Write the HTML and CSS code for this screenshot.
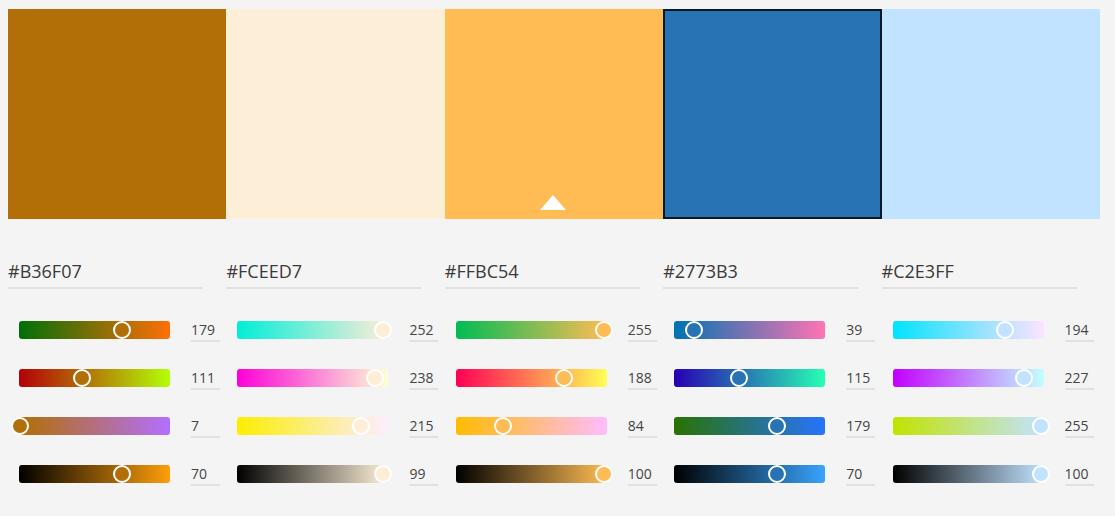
FILE: index.html
```html
<!DOCTYPE html>
<html lang="en">
<head>
<meta charset="utf-8">
<title>Color Theme</title>
<link rel="stylesheet" href="styles.css">
</head>
<body>
<main class="theme">
  <section class="col">
    <div class="swatch" style="background:#B36F07"></div>
    <div class="hex">#B36F07</div>
    <div class="sliders">
      <div class="row"><div class="bar" style="background:linear-gradient(to right,rgb(0,111,7),rgb(255,111,7))"><span class="thumb" style="left:94px;background:#B36F07"></span></div><div class="num">179</div></div>
      <div class="row"><div class="bar" style="background:linear-gradient(to right,rgb(179,0,7),rgb(179,255,7))"><span class="thumb" style="left:54px;background:#B36F07"></span></div><div class="num">111</div></div>
      <div class="row"><div class="bar" style="background:linear-gradient(to right,rgb(179,111,0),rgb(179,111,255))"><span class="thumb" style="left:-8px;background:#B36F07"></span></div><div class="num">7</div></div>
      <div class="row"><div class="bar" style="background:linear-gradient(to right,rgb(0,0,0),rgb(255,158,10))"><span class="thumb" style="left:94px;background:#B36F07"></span></div><div class="num">70</div></div>
    </div>
  </section>
  <section class="col">
    <div class="swatch" style="background:#FCEED7"></div>
    <div class="hex">#FCEED7</div>
    <div class="sliders">
      <div class="row"><div class="bar" style="background:linear-gradient(to right,rgb(0,238,215),rgb(255,238,215))"><span class="thumb" style="left:137px;background:#FCEED7"></span></div><div class="num">252</div></div>
      <div class="row"><div class="bar" style="background:linear-gradient(to right,rgb(252,0,215),rgb(252,255,215))"><span class="thumb" style="left:129px;background:#FCEED7"></span></div><div class="num">238</div></div>
      <div class="row"><div class="bar" style="background:linear-gradient(to right,rgb(252,238,0),rgb(252,238,255))"><span class="thumb" style="left:115px;background:#FCEED7"></span></div><div class="num">215</div></div>
      <div class="row"><div class="bar" style="background:linear-gradient(to right,rgb(0,0,0),rgb(255,241,218))"><span class="thumb" style="left:137px;background:#FCEED7"></span></div><div class="num">99</div></div>
    </div>
  </section>
  <section class="col">
    <div class="swatch" style="background:#FFBC54"><span class="marker"></span></div>
    <div class="hex">#FFBC54</div>
    <div class="sliders">
      <div class="row"><div class="bar" style="background:linear-gradient(to right,rgb(0,188,84),rgb(255,188,84))"><span class="thumb" style="left:139px;background:#FFBC54"></span></div><div class="num">255</div></div>
      <div class="row"><div class="bar" style="background:linear-gradient(to right,rgb(255,0,84),rgb(255,255,84))"><span class="thumb" style="left:99px;background:#FFBC54"></span></div><div class="num">188</div></div>
      <div class="row"><div class="bar" style="background:linear-gradient(to right,rgb(255,188,0),rgb(255,188,255))"><span class="thumb" style="left:38px;background:#FFBC54"></span></div><div class="num">84</div></div>
      <div class="row"><div class="bar" style="background:linear-gradient(to right,rgb(0,0,0),rgb(255,188,84))"><span class="thumb" style="left:139px;background:#FFBC54"></span></div><div class="num">100</div></div>
    </div>
  </section>
  <section class="col">
    <div class="swatch selected" style="background:#2773B3"></div>
    <div class="hex">#2773B3</div>
    <div class="sliders">
      <div class="row"><div class="bar" style="background:linear-gradient(to right,rgb(0,115,179),rgb(255,115,179))"><span class="thumb" style="left:11px;background:#2773B3"></span></div><div class="num">39</div></div>
      <div class="row"><div class="bar" style="background:linear-gradient(to right,rgb(39,0,179),rgb(39,255,179))"><span class="thumb" style="left:56px;background:#2773B3"></span></div><div class="num">115</div></div>
      <div class="row"><div class="bar" style="background:linear-gradient(to right,rgb(39,115,0),rgb(39,115,255))"><span class="thumb" style="left:94px;background:#2773B3"></span></div><div class="num">179</div></div>
      <div class="row"><div class="bar" style="background:linear-gradient(to right,rgb(0,0,0),rgb(56,164,255))"><span class="thumb" style="left:94px;background:#2773B3"></span></div><div class="num">70</div></div>
    </div>
  </section>
  <section class="col">
    <div class="swatch" style="background:#C2E3FF"></div>
    <div class="hex">#C2E3FF</div>
    <div class="sliders">
      <div class="row"><div class="bar" style="background:linear-gradient(to right,rgb(0,227,255),rgb(255,227,255))"><span class="thumb" style="left:103px;background:#C2E3FF"></span></div><div class="num">194</div></div>
      <div class="row"><div class="bar" style="background:linear-gradient(to right,rgb(194,0,255),rgb(194,255,255))"><span class="thumb" style="left:122px;background:#C2E3FF"></span></div><div class="num">227</div></div>
      <div class="row"><div class="bar" style="background:linear-gradient(to right,rgb(194,227,0),rgb(194,227,255))"><span class="thumb" style="left:139px;background:#C2E3FF"></span></div><div class="num">255</div></div>
      <div class="row"><div class="bar" style="background:linear-gradient(to right,rgb(0,0,0),rgb(194,227,255))"><span class="thumb" style="left:139px;background:#C2E3FF"></span></div><div class="num">100</div></div>
    </div>
  </section>
</main>
</body>
</html>
```
FILE: styles.css
```css
* { box-sizing: border-box; }
html, body {
  margin: 0;
  padding: 0;
  background: #f4f4f4;
  font-family: "Open Sans", "Noto Sans", sans-serif;
  color: #3c3c3c;
}
.theme {
  display: grid;
  grid-template-columns: repeat(5, 1fr);
  width: 1092px;
  margin: 9px 0 0 8px;
}
.col {
  display: flex;
  flex-direction: column;
  min-width: 0;
}
.swatch {
  position: relative;
  height: 210px;
}
.swatch.selected {
  border: 2px solid #0b1925;
}
.marker {
  position: absolute;
  left: 50%;
  bottom: 9px;
  margin-left: -13.5px;
  width: 0;
  height: 0;
  border-left: 13.5px solid transparent;
  border-right: 13.5px solid transparent;
  border-bottom: 15px solid #ffffff;
}
.hex {
  margin-top: 40px;
  width: 195px;
  font-size: 18px;
  line-height: 24px;
  padding-bottom: 4px;
  border-bottom: 2px solid #e1e1e1;
  color: #3a3a3a;
}
.sliders {
  display: flex;
  flex-direction: column;
  gap: 24px;
  margin-top: 29px;
  padding-left: 11px;
}
.row {
  display: flex;
  align-items: flex-start;
  gap: 21px;
  height: 24px;
}
.bar {
  position: relative;
  width: 151px;
  height: 18px;
  margin-top: 3px;
  border-radius: 3px;
}
.thumb {
  position: absolute;
  top: 0;
  width: 18px;
  height: 18px;
  border: 2px solid #ffffff;
  border-radius: 50%;
}
.num {
  width: 29px;
  padding-top: 2px;
  font-size: 14px;
  line-height: 20px;
  border-bottom: 2px solid #e1e1e1;
  color: #444444;
}
```
